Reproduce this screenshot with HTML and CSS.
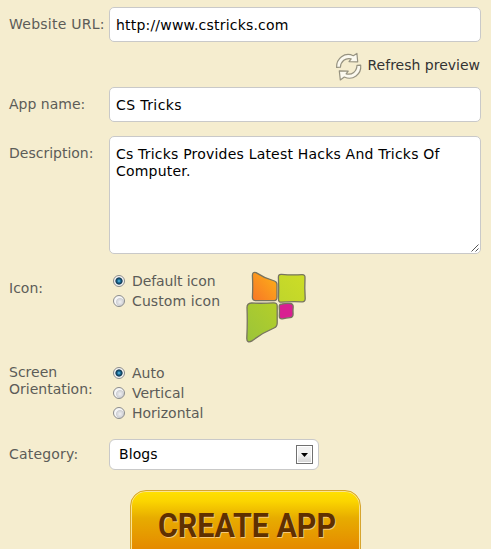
FILE: index.html
```html
<!DOCTYPE html>
<html lang="en">
<head>
<meta charset="utf-8">
<title>Create app</title>
<link rel="stylesheet" href="styles.css">
</head>
<body>
<form class="form">
  <div class="row row-url">
    <label class="label" for="url">Website URL:</label>
    <input class="field" id="url" type="text" value="http://www.cstricks.com">
  </div>
  <div class="refresh">
    <svg width="28" height="29" viewBox="0 0 28 29" fill="#fbf9ef" stroke="#969280" stroke-width="1.2" stroke-linejoin="round">
      <path d="M1.6 15.4C1.2 6.8 9.5 -.3 18.3 3.7L21.9 1.4L22.7 9.8L14 9.6L16.2 6.9C10.5 5.3 5.8 9.5 5.4 15.2Z"/>
      <path d="M25.7 13.2C26.6 22 18 29 9.3 25L5.3 27.9L4.3 18.9L13.2 19.2L11.1 21.8C17 23.4 21.8 19.4 22 13.3Z"/>
    </svg>
    <span>Refresh preview</span>
  </div>
  <div class="row row-name">
    <label class="label" for="name">App name:</label>
    <input class="field" id="name" type="text" value="CS Tricks">
  </div>
  <div class="row row-desc">
    <label class="label" for="desc">Description:</label>
    <div class="area-wrap">
      <textarea class="field area" id="desc">Cs Tricks Provides Latest Hacks And Tricks Of Computer.</textarea>
      <svg class="grip" width="8" height="8" viewBox="0 0 8 8" stroke="#555" stroke-width="1"><path d="M.5 7.5L7.5 .5M4.5 7.5L7.5 4.5"/></svg>
    </div>
  </div>
  <div class="row row-icon">
    <span class="label">Icon:</span>
    <div class="choices">
      <label class="choice"><i class="radio on"></i>Default icon</label>
      <label class="choice custom"><i class="radio"></i>Custom icon</label>
    </div>
    <svg class="logo" width="62" height="73" viewBox="0 0 62 73" stroke="#77745f" stroke-width="1.3">
      <defs>
        <linearGradient id="o" x1="0" y1="1" x2="1" y2="0"><stop stop-color="#f77627"/><stop offset="1" stop-color="#fdb316"/></linearGradient>
        <linearGradient id="g" x1="0" y1="1" x2="1" y2="0"><stop stop-color="#9bc43a"/><stop offset="1" stop-color="#b4cf29"/></linearGradient>
        <linearGradient id="l" x1="0" y1="1" x2="1" y2="0"><stop stop-color="#bfd52c"/><stop offset="1" stop-color="#cddd26"/></linearGradient>
      </defs>
      <path fill="url(#o)" d="M7.4 4.5Q7.5 .6 11 1.6Q19 7 29.5 10Q32.2 11 32 14V26Q32 29.7 29 29.6L11 29.7Q7.3 29.5 7.4 26Q8 15 7.4 4.5Z"/>
      <path fill="url(#l)" d="M33.4 6.5Q33.2 3 36.5 3.3Q47 4.2 57 3.6Q60.3 3.5 60 7Q59.5 17 60.2 27.5Q60.3 31 57 30.8Q46 30.3 36.5 31.2Q33.3 31.3 33.5 28Q34 17 33.4 6.5Z"/>
      <path fill="url(#g)" d="M2 36.5Q2 32.2 6.5 32Q17 32.6 28.5 31.8Q32.5 31.6 32.2 35.5V51.5Q32.4 55.5 29 57Q17 62 7.5 69.6Q1.6 73 1.8 67Q2.6 52 2 36.5Z"/>
      <path fill="#d91f91" d="M34.2 36Q34 33 37 33Q41 32.2 45 32.5Q48.4 32.7 48.2 36Q47.8 39.5 48.1 43Q48.2 46.4 45 46.6Q41 46.8 37.5 47.8Q34.2 48.3 34.3 45Q34.7 40 34.2 36Z"/>
    </svg>
  </div>
  <div class="row row-orient">
    <span class="label">Screen Orientation:</span>
    <div class="choices">
      <label class="choice"><i class="radio on"></i>Auto</label>
      <label class="choice"><i class="radio"></i>Vertical</label>
      <label class="choice"><i class="radio"></i>Horizontal</label>
    </div>
  </div>
  <div class="row row-cat">
    <span class="label">Category:</span>
    <div class="select"><span>Blogs</span><i class="drop"><svg width="7" height="4" viewBox="0 0 7 4"><path d="M0 0H7L3.5 4Z"/></svg></i></div>
  </div>
  <button class="create" type="button">
    <svg width="190" height="38" viewBox="0 0 190 38">
      <text class="create-shade" x="8" y="29.2" textLength="178" lengthAdjust="spacingAndGlyphs">CREATE APP</text>
      <text class="create-text" x="7" y="28" textLength="178" lengthAdjust="spacingAndGlyphs">CREATE APP</text>
    </svg>
  </button>
</form>
</body>
</html>
```
FILE: styles.css
```css
* { box-sizing: border-box; }
html, body { height: 549px; overflow: hidden; }
body {
  margin: 0;
  background: #f5edcf;
  color: #5c5c58;
  font: 14px/17px Verdana, "DejaVu Sans", sans-serif;
}
.form { display: flex; flex-direction: column; padding: 7px 10px 0 9px; }
.row { display: flex; flex: none; align-items: flex-start; }
.label { width: 100px; flex: none; padding-top: 9px; white-space: nowrap; }
.field {
  display: block;
  width: 372px;
  height: 35px;
  margin: 0;
  padding: 0 6px;
  border: 1px solid #c9c9c9;
  border-radius: 5px;
  background: #fff;
  color: #000;
  font: inherit;
  letter-spacing: .2px;
  outline: 0;
}
#name { letter-spacing: .4px; }
.row-url { height: 45px; }
.row-url .label { letter-spacing: .25px; }
.refresh { display: flex; height: 35px; justify-content: flex-end; gap: 4px; padding-right: 1px; color: #333; }
.refresh span { padding-top: 5px; }
.row-name { height: 49px; }
.row-desc { height: 135px; }
.area-wrap { position: relative; }
.area { height: 118px; padding: 9px 6px; resize: none; overflow: hidden; }
.grip { position: absolute; right: 2px; bottom: 2px; }
.row-icon { height: 92px; }
.choices { width: 136px; padding-left: 4px; }
.choice { display: flex; align-items: center; height: 20px; gap: 7px; white-space: nowrap; letter-spacing: -.1px; }
.custom { letter-spacing: .1px; }
.row-orient .choice { letter-spacing: 0; }
.radio {
  width: 12px;
  height: 12px;
  border: 1px solid #8b8c8c;
  border-radius: 50%;
  background: radial-gradient(circle at 60% 60%, #f0f0f2 0, #cfd0d4 3.6px, #f6f6f6 4.4px);
}
.radio.on { background: radial-gradient(circle at 50% 50%, #68c8ef 0, #1a6892 1.7px, #12354d 3.2px, #f5f5f5 4px); }
.logo { flex: none; }
.row-orient { height: 76px; }
.row-orient .label { white-space: normal; padding-top: 1px; }
.row-cat { height: 51px; }
.row-cat .label { padding-top: 7px; letter-spacing: .2px; }
.select {
  display: flex;
  align-items: center;
  justify-content: space-between;
  width: 210px;
  height: 31px;
  padding: 0 5px 0 9px;
  border: 1px solid #c9c9c9;
  border-radius: 6px;
  background: #fff;
  color: #000;
  letter-spacing: .1px;
}
.drop {
  display: flex;
  align-items: center;
  justify-content: center;
  width: 17px;
  height: 19px;
  border: 1px solid #707070;
  box-shadow: inset 0 0 0 1px #fff;
  background: linear-gradient(#f2f2f2 50%, #d2d2d2);
}
.create {
  display: flex;
  align-items: flex-start;
  width: 231px;
  height: 76px;
  margin-left: 121px;
  padding: 18px 0 0 20px;
  border: 1px solid #d6a52f;
  border-radius: 16px;
  background: linear-gradient(#ffe100 0, #fbd500 10px, #e7ac00 27px, #e58b00 57px);
  box-shadow: inset 0 0 0 1px #fbe391;
}
.create svg { display: block; flex: none; overflow: visible; }
.create text { font: bold 34px Roboto, sans-serif; }
.create-shade { fill: #f6c878; }
.create-text { fill: #5f3000; }
```
